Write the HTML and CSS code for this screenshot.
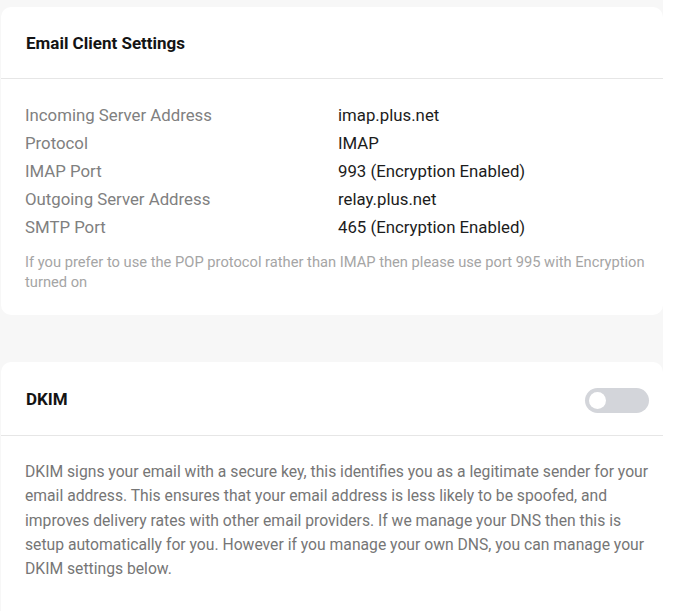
FILE: index.html
```
<!DOCTYPE html>
<html lang="en">
<head>
    <meta charset="UTF-8">
    <meta name="viewport" content="width=device-width, initial-scale=1.0">
    <title>Email Settings</title>
    <link rel="stylesheet" href="styles.css">
</head>
<body>

<main class="settings">

    <!-- Email client settings card -->
    <section class="card">
        <div class="card-header">
            <h2>Email Client Settings</h2>
        </div>
        <div class="card-body client-body">
            <dl class="details">
                <dt>Incoming Server Address</dt>
                <dd>imap.plus.net</dd>
                <dt>Protocol</dt>
                <dd>IMAP</dd>
                <dt>IMAP Port</dt>
                <dd>993 (Encryption Enabled)</dd>
                <dt>Outgoing Server Address</dt>
                <dd>relay.plus.net</dd>
                <dt>SMTP Port</dt>
                <dd>465 (Encryption Enabled)</dd>
            </dl>
            <p class="note">If you prefer to use the POP protocol rather than IMAP then please use port 995 with Encryption turned on</p>
        </div>
    </section>

    <!-- DKIM card -->
    <section class="card">
        <div class="card-header">
            <h2>DKIM</h2>
            <label class="toggle">
                <input type="checkbox" id="dkim-toggle">
                <span class="slider"></span>
            </label>
        </div>
        <div class="card-body dkim-body">
            <p class="description">DKIM signs your email with a secure key, this identifies you as a legitimate sender for your email address. This ensures that your email address is less likely to be spoofed, and improves delivery rates with other email providers. If we manage your DNS then this is setup automatically for you. However if you manage your own DNS, you can manage your DKIM settings below.</p>
        </div>
    </section>

</main>

</body>
</html>
```

FILE: styles.css
```
* {
    margin: 0;
    padding: 0;
    box-sizing: border-box;
}

body {
    font-family: Roboto, 'Noto Sans', Arial, sans-serif;
    background-color: #ffffff;
    color: #1c1c1c;
}

.settings {
    width: 663px;
    background-color: #f7f7f7;
    padding-top: 7px;
    display: flex;
    flex-direction: column;
    gap: 47px;
}

.card {
    background: #ffffff;
    border-radius: 10px;
    margin-left: 1px;
}

.card-header {
    height: 72px;
    display: flex;
    align-items: center;
    justify-content: space-between;
    padding: 0 14px 0 25px;
    border-bottom: 1px solid #e6e6e6;
}

.card-header h2 {
    font-size: 17px;
    font-weight: 700;
    color: #141414;
}

.card-body {
    padding: 0 10px 0 24px;
}

.client-body {
    padding-top: 22px;
    padding-bottom: 23px;
}

.details {
    display: grid;
    grid-template-columns: 313px 1fr;
    font-size: 16.8px;
    line-height: 28px;
}

.details dt {
    color: #808080;
}

.details dd {
    color: #1c1c1c;
}

.note {
    margin-top: 11px;
    font-size: 14.7px;
    line-height: 20px;
    color: #a5a5a5;
}

/* DKIM */
.card + .card .card-header {
    height: 74px;
}

.toggle {
    position: relative;
    display: inline-block;
    width: 64px;
    height: 25px;
    margin-top: 4px;
}

.toggle input {
    display: none;
}

.slider {
    position: absolute;
    inset: 0;
    background-color: #d3d5da;
    border-radius: 13px;
    cursor: pointer;
}

.slider::before {
    content: "";
    position: absolute;
    left: 4px;
    top: 4px;
    width: 17px;
    height: 17px;
    border-radius: 50%;
    background: #ffffff;
}

.dkim-body {
    padding-top: 24px;
    padding-bottom: 40px;
}

.description {
    font-size: 15.7px;
    line-height: 24.3px;
    color: #767676;
}
```
